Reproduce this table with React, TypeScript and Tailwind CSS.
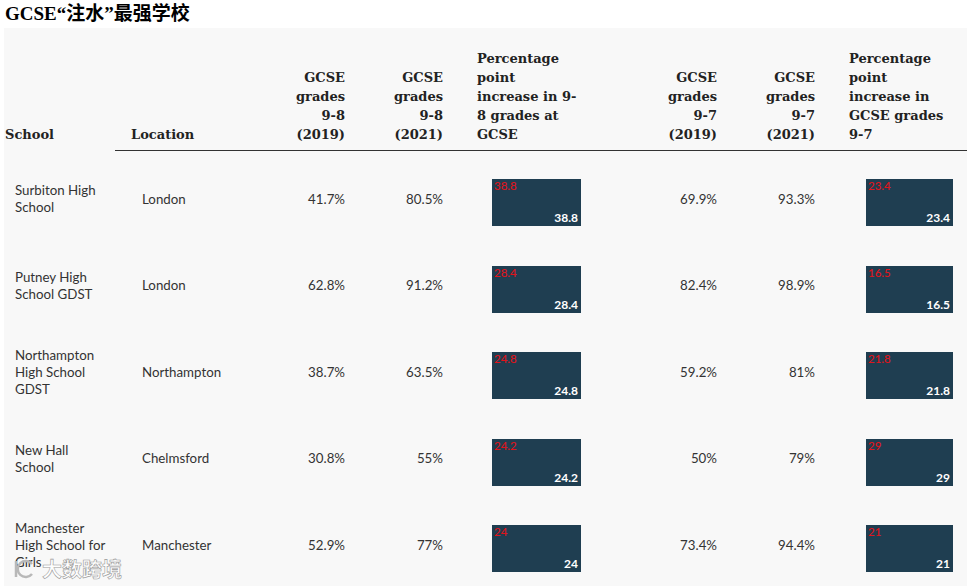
import React from "react";

type Row = {
  school: string[];
  location: string;
  a19: string;
  a21: string;
  inc8: string;
  b19: string;
  b21: string;
  inc7: string;
};

const rows: Row[] = [
  { school: ["Surbiton High", "School"], location: "London", a19: "41.7%", a21: "80.5%", inc8: "38.8", b19: "69.9%", b21: "93.3%", inc7: "23.4" },
  { school: ["Putney High", "School GDST"], location: "London", a19: "62.8%", a21: "91.2%", inc8: "28.4", b19: "82.4%", b21: "98.9%", inc7: "16.5" },
  { school: ["Northampton", "High School", "GDST"], location: "Northampton", a19: "38.7%", a21: "63.5%", inc8: "24.8", b19: "59.2%", b21: "81%", inc7: "21.8" },
  { school: ["New Hall", "School"], location: "Chelmsford", a19: "30.8%", a21: "55%", inc8: "24.2", b19: "50%", b21: "79%", inc7: "29" },
  { school: ["Manchester", "High School for", "Girls"], location: "Manchester", a19: "52.9%", a21: "77%", inc8: "24", b19: "73.4%", b21: "94.4%", inc7: "21" },
];

const head = "align-bottom pb-[6px] font-bold text-[13px] leading-[19px] text-[#222] border-b border-[#333] whitespace-nowrap";

function Bar({ value, width }: { value: string; width: string }) {
  return (
    <div className={`relative mt-[7px] h-[47px] bg-[#1f3e51] ${width}`}>
      <span className="absolute left-[2px] top-[0px] text-[11.5px] leading-[14px] font-medium text-[#e0141b]">{value}</span>
      <span className="absolute right-[3px] bottom-[1px] text-[12px] leading-[14px] font-bold text-white">{value}</span>
    </div>
  );
}

export default function App() {
  return (
    <div className="relative w-[970px] h-[586px] overflow-hidden bg-white">
      <h1 className="h-[28px] pl-[5px] pt-[3px] text-[19px] leading-[22px] font-bold text-black [font-family:'Liberation_Serif','Noto_Sans_CJK_SC',serif]">
        GCSE“注水”最强学校
      </h1>
      <div className="ml-[4px] w-[963px] h-[600px] bg-[#f8f8f8]">
        <table className="table-fixed border-collapse w-[963px]">
          <colgroup>
            <col className="w-[111px]" />
            <col className="w-[147px]" />
            <col className="w-[93px]" />
            <col className="w-[98px]" />
            <col className="w-[174px]" />
            <col className="w-[100px]" />
            <col className="w-[98px]" />
            <col className="w-[142px]" />
          </colgroup>
          <thead className="[font-family:'DejaVu_Serif',serif]">
            <tr className="h-[122px]">
              <th className="align-bottom pb-[6px] font-bold text-[13px] leading-[19px] text-[#222] text-left pl-[1px]">School</th>
              <th className={`${head} text-left pl-[16px]`}>Location</th>
              <th className={`${head} text-right pr-[10px]`}>GCSE<br />grades<br />9-8<br />(2019)</th>
              <th className={`${head} text-right pr-[10px]`}>GCSE<br />grades<br />9-8<br />(2021)</th>
              <th className={`${head} text-left pl-[24px]`}>Percentage<br />point<br />increase in 9-<br />8 grades at<br />GCSE</th>
              <th className={`${head} text-right pr-[10px]`}>GCSE<br />grades<br />9-7<br />(2019)</th>
              <th className={`${head} text-right pr-[10px]`}>GCSE<br />grades<br />9-7<br />(2021)</th>
              <th className={`${head} text-left pl-[24px]`}>Percentage<br />point<br />increase in<br />GCSE grades<br />9-7</th>
            </tr>
          </thead>
          <tbody className="[font-family:Lato,sans-serif] text-[13.3px] leading-[17px] text-[#333]">
            <tr className="h-[6px]"><td colSpan={8}></td></tr>
            {rows.map((r) => (
              <tr key={r.location + r.a19} className="h-[86.5px]">
                <td className="align-middle pl-[11px] whitespace-nowrap">
                  {r.school.map((l) => (
                    <div key={l}>{l}</div>
                  ))}
                </td>
                <td className="align-middle pl-[27px]">{r.location}</td>
                <td className="align-middle text-right pr-[10px]">{r.a19}</td>
                <td className="align-middle text-right pr-[10px]">{r.a21}</td>
                <td className="align-middle pl-[39px]"><Bar value={r.inc8} width="w-[89px]" /></td>
                <td className="align-middle text-right pr-[10px]">{r.b19}</td>
                <td className="align-middle text-right pr-[10px]">{r.b21}</td>
                <td className="align-middle pl-[41px]"><Bar value={r.inc7} width="w-[87px]" /></td>
              </tr>
            ))}
          </tbody>
        </table>
      </div>
      <div className="absolute left-[12px] top-[557px] flex items-center gap-[6px] text-[20px] leading-[24px] font-bold text-white/80 [font-family:'Noto_Sans_CJK_SC',sans-serif] [-webkit-text-stroke:0.6px_#9a9a9a]">
        <svg width="24" height="22" viewBox="0 0 24 22" fill="none" stroke="#b8b8b8" strokeWidth="2.5">
          <path d="M4 3 V19" />
          <path d="M20 6 A8 8 0 1 0 20 16" />
        </svg>
        <span>大数跨境</span>
      </div>
    </div>
  );
}
